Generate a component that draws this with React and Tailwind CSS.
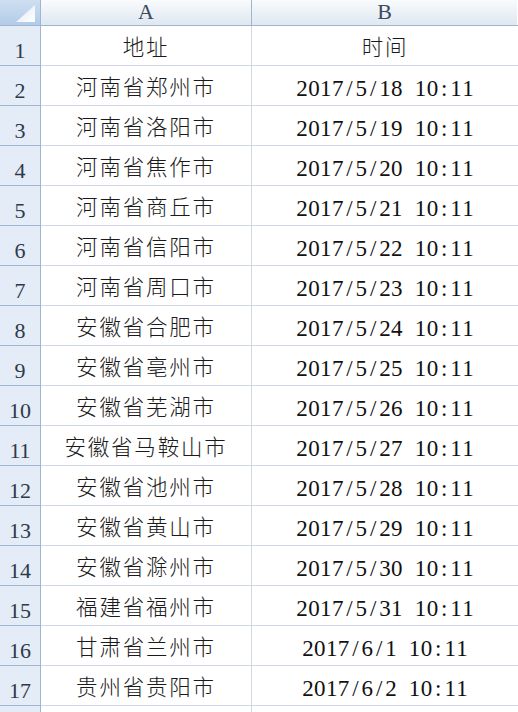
const rows = [
  ['地址', '时间'],
  ['河南省郑州市', '2017/5/18 10:11'],
  ['河南省洛阳市', '2017/5/19 10:11'],
  ['河南省焦作市', '2017/5/20 10:11'],
  ['河南省商丘市', '2017/5/21 10:11'],
  ['河南省信阳市', '2017/5/22 10:11'],
  ['河南省周口市', '2017/5/23 10:11'],
  ['安徽省合肥市', '2017/5/24 10:11'],
  ['安徽省亳州市', '2017/5/25 10:11'],
  ['安徽省芜湖市', '2017/5/26 10:11'],
  ['安徽省马鞍山市', '2017/5/27 10:11'],
  ['安徽省池州市', '2017/5/28 10:11'],
  ['安徽省黄山市', '2017/5/29 10:11'],
  ['安徽省滁州市', '2017/5/30 10:11'],
  ['福建省福州市', '2017/5/31 10:11'],
  ['甘肃省兰州市', '2017/6/1 10:11'],
  ['贵州省贵阳市', '2017/6/2 10:11'],
]

// SimSun-like half-width latin: every char gets the same advance
function Mono({ text }) {
  return (
    <span className="flex">
      {text.split('').map((ch, i) => (
        <span key={i} className="inline-block w-[11.85px] text-center">{ch === ' ' ? '\u00a0' : ch}</span>
      ))}
    </span>
  )
}

function ColHead({ label, className }) {
  return (
    <div className={`flex h-[26px] items-end justify-center border-r border-b border-[#9eb6ce] bg-gradient-to-b from-[#f9fbfd] to-[#dfe7f1] pb-[2px] text-[22px] leading-none text-[#3c4a5c] ${className}`}>
      {label}
    </div>
  )
}

export default function App() {
  return (
    <div className="h-[712px] w-[518px] overflow-hidden bg-white font-['Liberation_Serif','Noto_Sans_CJK_SC',serif] text-black">
      <div className="flex">
        <div className="relative h-[26px] w-[41px] shrink-0 border-r border-b border-[#9eb6ce] bg-gradient-to-b from-[#cfdff2] to-[#b3cbe8]">
          <svg className="absolute right-[5px] bottom-[3px]" width="19" height="17" viewBox="0 0 19 17">
            <defs>
              <linearGradient id="tri" x1="0" y1="0" x2="1" y2="1">
                <stop offset="0" stopColor="#dfe9f5" />
                <stop offset="1" stopColor="#ffffff" />
              </linearGradient>
            </defs>
            <polygon points="19,0 19,17 0,17" fill="url(#tri)" />
          </svg>
        </div>
        <ColHead label="A" className="w-[211px] shrink-0" />
        <ColHead label="B" className="w-[265px] shrink-0 border-r-0" />
        <div className="flex-1 border-b border-[#9eb6ce] bg-white" />
      </div>
      {[...rows, ['', '']].map((r, i) => (
        <div key={i} className="flex h-[40px]">
          <div className="flex w-[41px] shrink-0 items-end justify-center border-r border-b border-[#9eb6ce] bg-[#e4ecf7] pb-[3px] text-[22px] leading-none text-[#2e3a48]">
            {i < rows.length ? i + 1 : ''}
          </div>
          <div className="flex w-[211px] shrink-0 items-center justify-center border-r border-b border-[#d0d7e5] pt-[7px] text-[21.5px] font-light leading-none tracking-[1.8px] text-[#1a1a1a]">
            {r[0]}
          </div>
          <div className="flex w-[266px] shrink-0 items-center justify-center border-b border-[#d0d7e5] pt-[6px] text-[23px] leading-none text-[#111]">
            {i === 0 ? <span className="pt-[1px] text-[21.5px] font-light tracking-[1.8px] text-[#1a1a1a]">{r[1]}</span> : <Mono text={r[1]} />}
          </div>
        </div>
      ))}
    </div>
  )
}
